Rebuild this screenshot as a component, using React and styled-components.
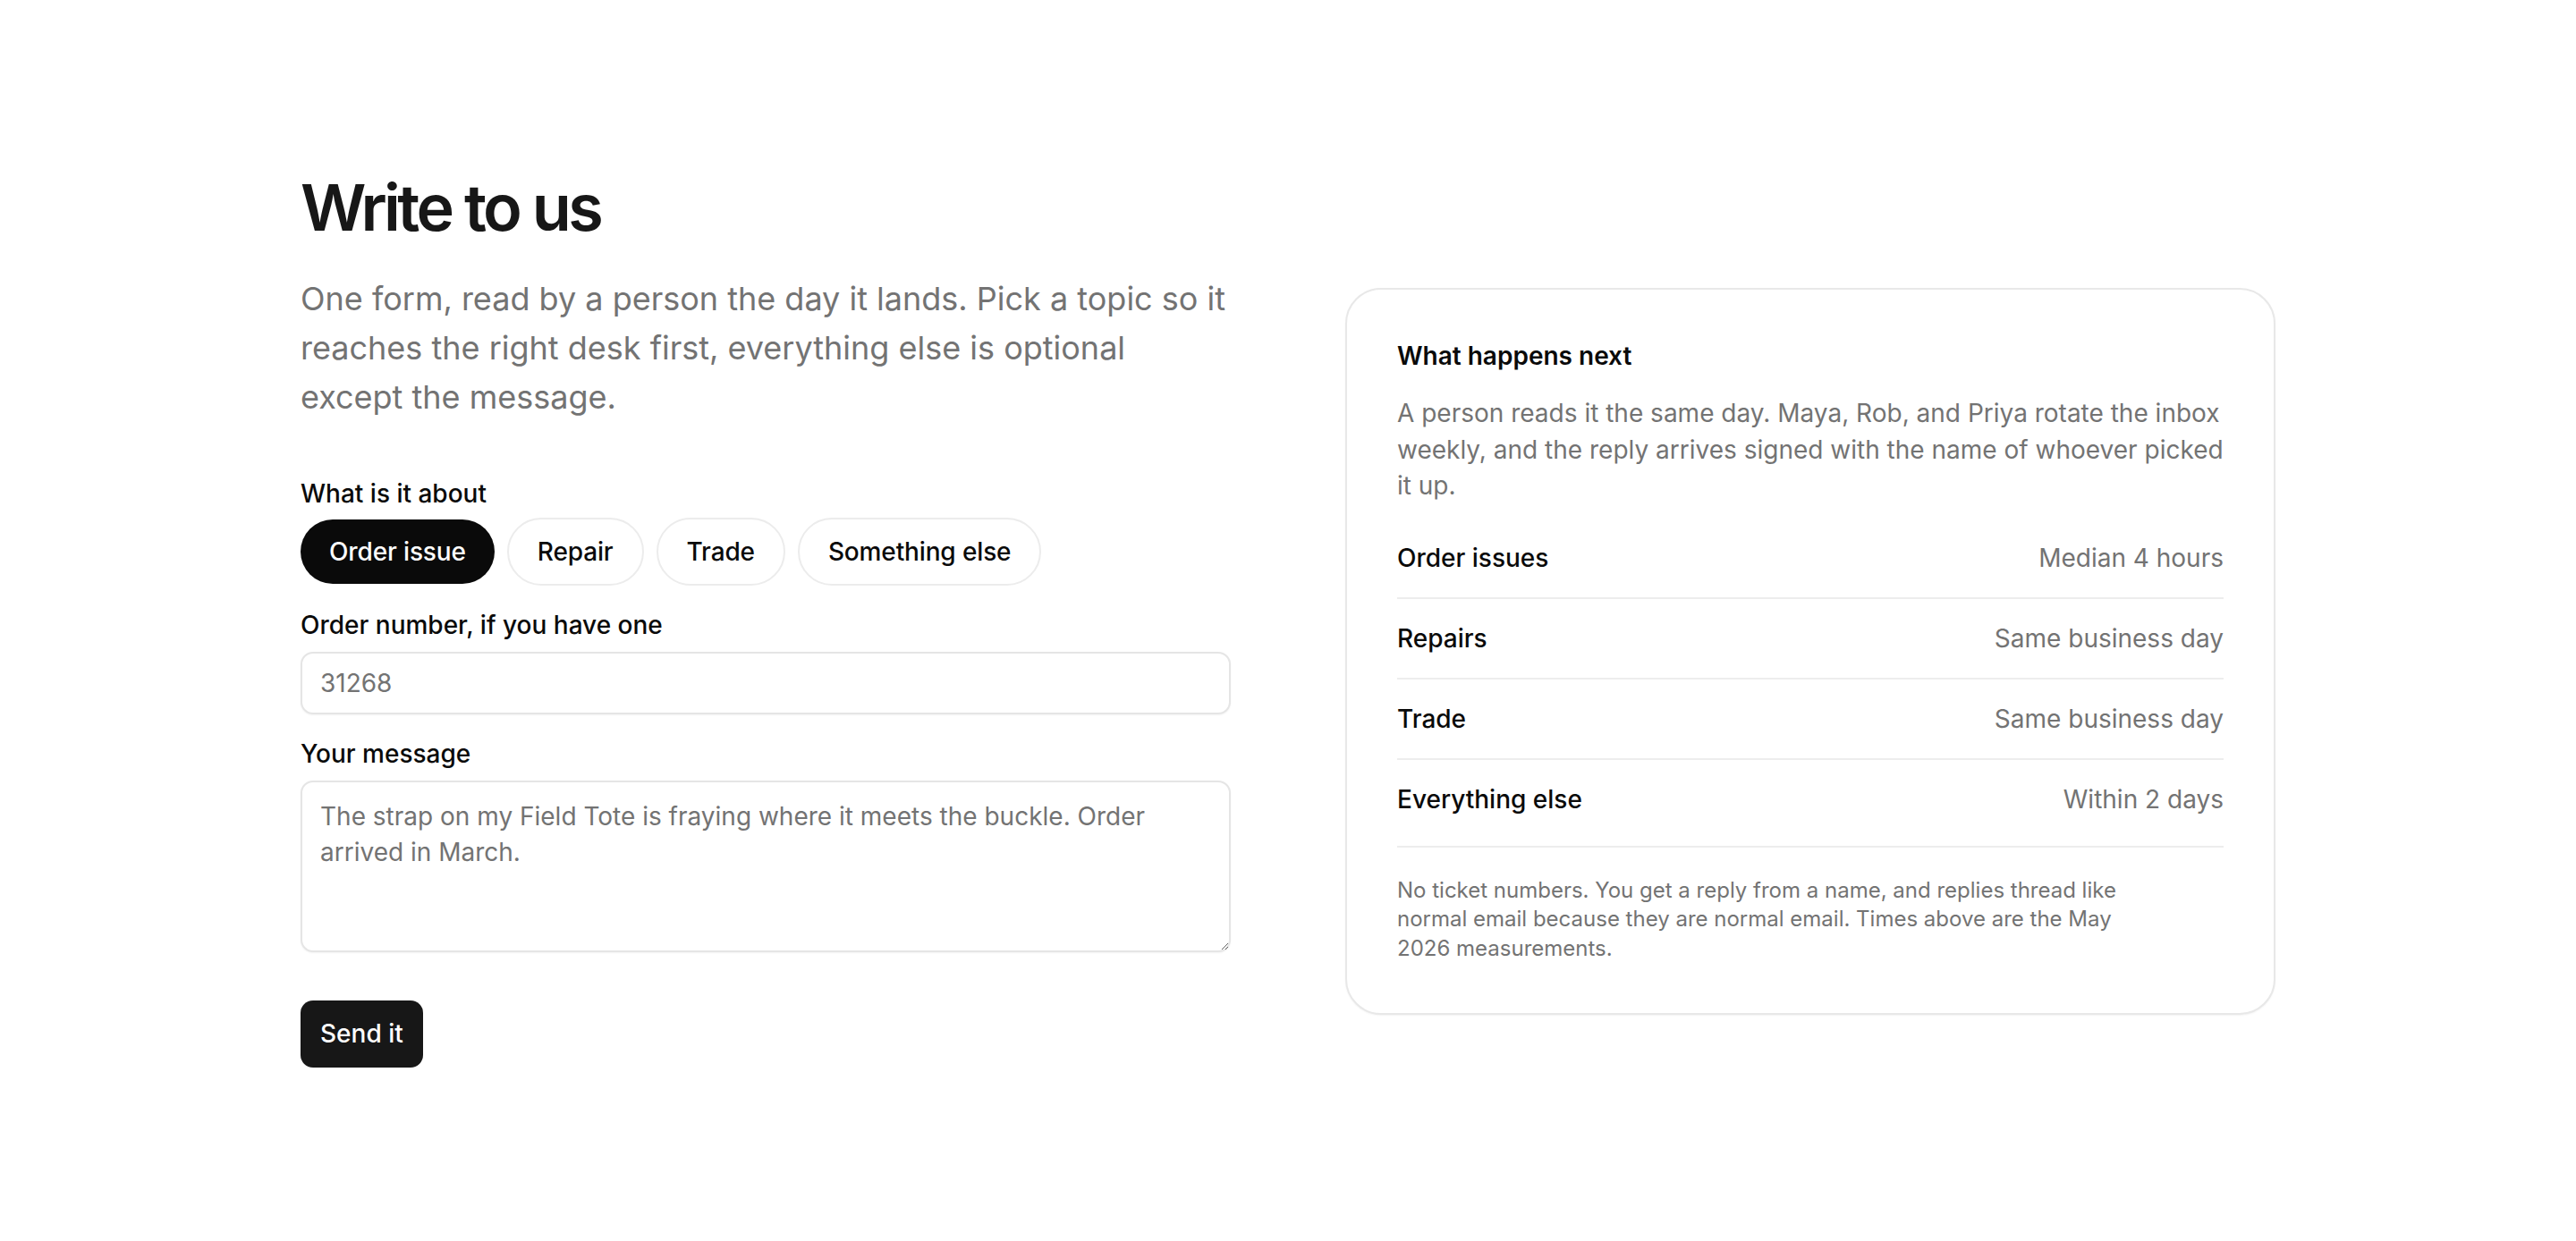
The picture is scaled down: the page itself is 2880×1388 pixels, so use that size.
import { useState } from 'react';
import styled, { createGlobalStyle } from 'styled-components';

const topics = ['Order issue', 'Repair', 'Trade', 'Something else'];

const times = [
  { name: 'Order issues', value: 'Median 4 hours' },
  { name: 'Repairs', value: 'Same business day' },
  { name: 'Trade', value: 'Same business day' },
  { name: 'Everything else', value: 'Within 2 days' },
];

const App = () => {
  const [topic, setTopic] = useState('Order issue');

  return (
    <>
      <GlobalStyle />
      <StyledPage>
        <StyledLayout>
          <StyledMain>
            <StyledTitle>Write to us</StyledTitle>
            <StyledLead>
              One form, read by a person the day it lands. Pick a topic so it
              reaches the right desk first, everything else is optional except
              the message.
            </StyledLead>
            <StyledForm onSubmit={(e) => e.preventDefault()}>
              <StyledField>
                <StyledLabel as='span'>What is it about</StyledLabel>
                <StyledChips>
                  {topics.map((t) => (
                    <StyledChip
                      type='button'
                      key={t}
                      $active={t === topic}
                      onClick={() => setTopic(t)}
                    >
                      {t}
                    </StyledChip>
                  ))}
                </StyledChips>
              </StyledField>
              <StyledField>
                <StyledLabel htmlFor='order'>
                  Order number, if you have one
                </StyledLabel>
                <StyledInput id='order' placeholder='31268' />
              </StyledField>
              <StyledField>
                <StyledLabel htmlFor='message'>Your message</StyledLabel>
                <StyledTextarea
                  id='message'
                  placeholder='The strap on my Field Tote is fraying where it meets the buckle. Order arrived in March.'
                />
              </StyledField>
              <StyledActions>
                <StyledButton type='submit'>Send it</StyledButton>
              </StyledActions>
            </StyledForm>
          </StyledMain>

          <StyledAside>
            <StyledCard>
              <StyledCardTitle>What happens next</StyledCardTitle>
              <StyledCardText>
                A person reads it the same day. Maya, Rob, and Priya rotate the
                inbox weekly, and the reply arrives signed with the name of
                whoever picked it up.
              </StyledCardText>
              <StyledRows>
                {times.map((row) => (
                  <StyledRow key={row.name}>
                    <StyledRowName>{row.name}</StyledRowName>
                    <StyledRowValue>{row.value}</StyledRowValue>
                  </StyledRow>
                ))}
              </StyledRows>
              <StyledNote>
                <p>
                  No ticket numbers. You get a reply from a name, and replies
                  thread like normal email because they are normal email. Times
                  above are the May 2026 measurements.
                </p>
              </StyledNote>
            </StyledCard>
          </StyledAside>
        </StyledLayout>
      </StyledPage>
    </>
  );
};

const GlobalStyle = createGlobalStyle`
  * {
    box-sizing: border-box;
  }

  body {
    margin: 0;
    background: #fff;
    color: #0a0a0a;
    font-family: Inter, 'Noto Sans', sans-serif;
  }
`;

const StyledPage = styled.div`
  min-height: 100vh;
  display: flex;
  align-items: center;
  justify-content: center;
`;

const StyledLayout = styled.div`
  width: 2208px;
  display: grid;
  grid-template-columns: 1fr 1fr;
  gap: 128px;
  align-items: start;
`;

const StyledMain = styled.div`
  display: flex;
  flex-direction: column;
`;

const StyledTitle = styled.h1`
  margin: 0 0 37px;
  font-size: 72px;
  line-height: 1.05;
  font-weight: 600;
  letter-spacing: -0.05em;
  color: #171717;
`;

const StyledLead = styled.p`
  margin: 0 0 62px;
  font-size: 36px;
  line-height: 55px;
  color: #737373;
`;

const StyledForm = styled.form`
  display: flex;
  flex-direction: column;
  gap: 26px;
`;

const StyledField = styled.div`
  display: flex;
  flex-direction: column;
  gap: 12px;
`;

const StyledLabel = styled.label`
  font-size: 28px;
  line-height: 36px;
  font-weight: 500;
  color: #0a0a0a;
`;

const StyledChips = styled.div`
  display: flex;
  align-items: center;
  gap: 14px;
  margin-top: -3px;
`;

const StyledChip = styled.button`
  height: ${(p) => (p.$active ? '72px' : '76px')};
  padding: 0 32px;
  border-radius: 999px;
  border: ${(p) => (p.$active ? 'none' : '2px solid #ececec')};
  background: ${(p) => (p.$active ? '#0a0a0a' : '#fff')};
  color: ${(p) => (p.$active ? '#fff' : '#0a0a0a')};
  font-family: inherit;
  font-size: 28px;
  font-weight: 500;
  letter-spacing: -0.005em;
  cursor: pointer;
`;

const StyledInput = styled.input`
  width: 100%;
  height: 70px;
  padding: 0 20px;
  border: 2px solid #e5e5e5;
  border-radius: 14px;
  box-shadow: 0 1px 2px rgba(0, 0, 0, 0.05);
  font-family: inherit;
  font-size: 28px;
  color: #0a0a0a;
  outline: none;

  &::placeholder {
    color: #737373;
  }
`;

const StyledTextarea = styled.textarea`
  width: 100%;
  height: 192px;
  padding: 18px 20px;
  border: 2px solid #e5e5e5;
  border-radius: 14px;
  box-shadow: 0 1px 2px rgba(0, 0, 0, 0.05);
  font-family: inherit;
  font-size: 28px;
  line-height: 40px;
  color: #0a0a0a;
  outline: none;
  resize: vertical;

  &::placeholder {
    color: #737373;
  }
`;

const StyledActions = styled.div`
  margin-top: 28px;
  display: flex;
`;

const StyledButton = styled.button`
  height: 75px;
  padding: 0 22px;
  border: none;
  border-radius: 14px;
  background: #171717;
  color: #fff;
  font-family: inherit;
  font-size: 28px;
  font-weight: 500;
  cursor: pointer;
`;

const StyledAside = styled.aside`
  margin-top: 128px;
`;

const StyledCard = styled.div`
  padding: 56px;
  border: 2px solid #e8e8e8;
  border-radius: 40px;
  box-shadow: 0 1px 2px rgba(0, 0, 0, 0.05);
  background: #fff;
`;

const StyledCardTitle = styled.h2`
  margin: 0 0 26px;
  font-size: 28px;
  line-height: 36px;
  font-weight: 600;
  color: #0a0a0a;
`;

const StyledCardText = styled.p`
  margin: 0 0 16px;
  font-size: 28px;
  line-height: 40.6px;
  color: #737373;
`;

const StyledRows = styled.div`
  display: flex;
  flex-direction: column;
`;

const StyledRow = styled.div`
  display: flex;
  justify-content: space-between;
  align-items: center;
  padding: 24px 0;
  border-bottom: 2px solid #ededed;
  font-size: 28px;
  line-height: 40px;

  &:last-child {
    border-bottom: none;
  }
`;

const StyledRowName = styled.span`
  font-weight: 500;
  color: #0a0a0a;
`;

const StyledRowValue = styled.span`
  color: #737373;
`;

const StyledNote = styled.div`
  margin-top: 8px;
  padding-top: 32px;
  border-top: 2px solid #ededed;

  p {
    margin: 0;
    max-width: 820px;
    font-size: 24px;
    line-height: 32.4px;
    color: #737373;
  }
`;

export default App;
